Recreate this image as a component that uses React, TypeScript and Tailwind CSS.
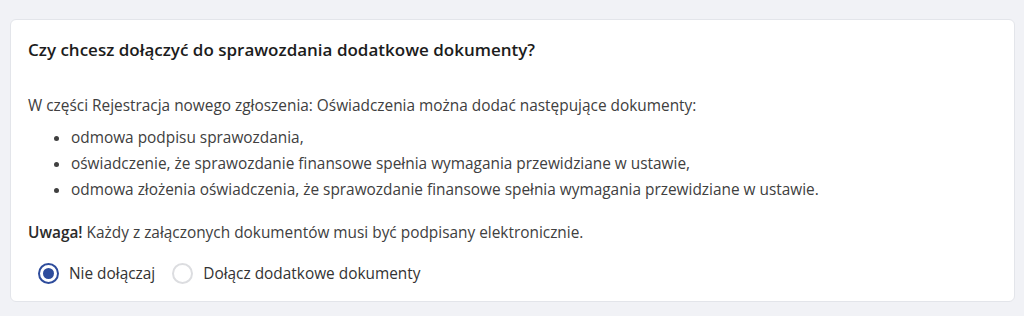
import React from "react";

export default function App() {
  return (
    <div
      className="w-[1024px] h-[316px] bg-[#f1f2f6] pt-[19px] pl-[10px] pr-[9px]"
      style={{ fontFamily: '"Open Sans", "Noto Sans", sans-serif' }}
    >
      <div className="bg-white border border-[#e3e5ea] rounded-[6px] h-[283px] pl-[17px] pt-[18px]">
        <h2 className="text-[17px] leading-[24px] font-semibold text-[#1c1c1c]">
          Czy chcesz dołączyć do sprawozdania dodatkowe dokumenty?
        </h2>
        <div className="mt-[31px] text-[15.4px] leading-[26px] text-[#404040]">
          <p>W części Rejestracja nowego zgłoszenia: Oświadczenia można dodać następujące dokumenty:</p>
          <ul className="mt-[6px] pl-[43px] list-disc">
            <li>odmowa podpisu sprawozdania,</li>
            <li>oświadczenie, że sprawozdanie finansowe spełnia wymagania przewidziane w ustawie,</li>
            <li>odmowa złożenia oświadczenia, że sprawozdanie finansowe spełnia wymagania przewidziane w ustawie.</li>
          </ul>
          <p className="mt-[17px]">
            <span className="font-semibold text-[#2a2a2a]">Uwaga!</span> Każdy z załączonych dokumentów musi być podpisany elektronicznie.
          </p>
        </div>
        <div className="mt-[16px] flex items-center pl-[10px] text-[15.4px] text-[#333]">
          <label className="flex items-center gap-[10px]">
            <span className="w-[21px] h-[21px] rounded-full border-[2px] border-[#2e4c9c] flex items-center justify-center">
              <span className="w-[11px] h-[11px] rounded-full bg-[#2e4c9c]" />
            </span>
            <span>Nie dołączaj</span>
          </label>
          <label className="flex items-center gap-[10px] ml-[17px]">
            <span className="w-[21px] h-[21px] rounded-full border-[2px] border-[#dcdde0]" />
            <span>Dołącz dodatkowe dokumenty</span>
          </label>
        </div>
      </div>
    </div>
  );
}
